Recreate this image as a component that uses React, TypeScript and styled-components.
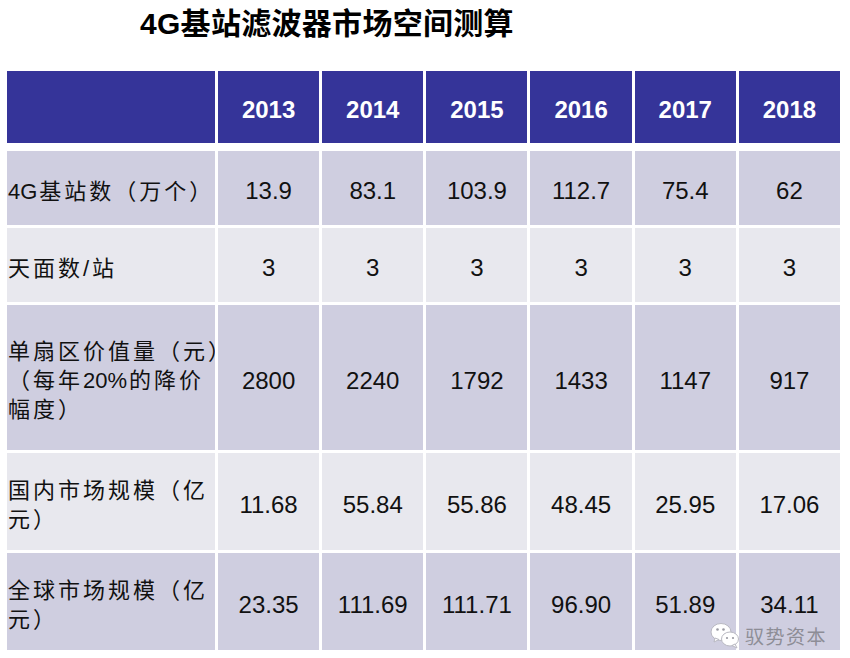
import React from 'react';
import styled, { createGlobalStyle } from 'styled-components';

const GlobalStyle = createGlobalStyle`
    html, body {
        margin: 0;
        padding: 0;
        background: #ffffff;
    }
    body {
        font-family: "Liberation Sans", Arial, "Noto Sans CJK SC", sans-serif;
    }
`;

const Page = styled.div`
    position: relative;
    width: 850px;
    height: 658px;
    overflow: hidden;
`;

const Title = styled.h1`
    margin: 0;
    height: 71px;
    padding: 5px 0 0 140px;
    box-sizing: border-box;
    font-family: "Liberation Sans", Arial, "Noto Sans CJK SC", sans-serif;
    font-size: 30px;
    font-weight: bold;
    line-height: 38px;
    color: #000;
    letter-spacing: 0.3px;
`;

const Table = styled.div`
    display: flex;
    flex-direction: column;
    gap: 3px;
    margin-left: 7px;
    width: 833px;
`;

const Row = styled.div<{ height: number; tone: 'head' | 'dark' | 'light' }>`
    display: grid;
    grid-template-columns: 208px repeat(6, 1fr);
    column-gap: 3px;
    height: ${p => p.height}px;
    margin-bottom: ${p => (p.tone === 'head' ? 5 : 0)}px;

    & > div {
        background: ${p =>
            p.tone === 'head' ? '#353499' : p.tone === 'dark' ? '#cfcee0' : '#e8e8ee'};
    }
`;

const Label = styled.div`
    display: flex;
    align-items: center;
    overflow: hidden;
    white-space: nowrap;
    padding: 6px 0 0 1px;
    box-sizing: border-box;
    font-family: "Liberation Sans", Arial, "Noto Sans CJK SC", sans-serif;
    font-size: 22px;
    letter-spacing: 3px;
    line-height: 29px;
    color: #111;
`;

const Latin = styled.span`
    letter-spacing: 0;
    margin-right: 2px;
`;

const Cell = styled.div<{ head?: boolean }>`
    display: flex;
    align-items: center;
    justify-content: center;
    padding-top: ${p => (p.head ? 6 : 6)}px;
    box-sizing: border-box;
    font-family: "Liberation Sans", Arial, sans-serif;
    font-size: 24px;
    font-weight: ${p => (p.head ? 'bold' : 'normal')};
    color: ${p => (p.head ? '#ffffff' : '#111111')};
`;

const Watermark = styled.div`
    position: absolute;
    left: 710px;
    top: 621px;
    display: flex;
    align-items: center;
    gap: 5px;
    font-family: "Noto Sans CJK SC", sans-serif;
    font-size: 19px;
    letter-spacing: 1.5px;
    color: #8d8d96;
`;

const years = ['2013', '2014', '2015', '2016', '2017', '2018'];

const rows: { label: React.ReactNode; values: string[]; height: number; tone: 'dark' | 'light' }[] = [
    {
        label: (
            <span>
                <Latin>4G</Latin>基站数（万个）
            </span>
        ),
        values: ['13.9', '83.1', '103.9', '112.7', '75.4', '62'],
        height: 74,
        tone: 'dark',
    },
    { label: '天面数/站', values: ['3', '3', '3', '3', '3', '3'], height: 74, tone: 'light' },
    {
        label: (
            <span>
                单扇区价值量（元）
                <br />
                （每年<Latin>20%</Latin>的降价
                <br />
                幅度）
            </span>
        ),
        values: ['2800', '2240', '1792', '1433', '1147', '917'],
        height: 145,
        tone: 'dark',
    },
    {
        label: (
            <span>
                国内市场规模（亿
                <br />
                元）
            </span>
        ),
        values: ['11.68', '55.84', '55.86', '48.45', '25.95', '17.06'],
        height: 97,
        tone: 'light',
    },
    {
        label: (
            <span>
                全球市场规模（亿
                <br />
                元）
            </span>
        ),
        values: ['23.35', '111.69', '111.71', '96.90', '51.89', '34.11'],
        height: 97,
        tone: 'dark',
    },
];

const WeChatIcon: React.FC = () => (
    <svg width="30" height="28" viewBox="0 0 30 28">
        <ellipse cx="11" cy="11" rx="10" ry="8.5" fill="#fff" stroke="#b9b9c2" strokeWidth="1" />
        <path d="M5 17 L4 21 L9 18.5 Z" fill="#fff" stroke="#b9b9c2" strokeWidth="1" />
        <circle cx="7.5" cy="8.5" r="1.3" fill="#9a9aa3" />
        <circle cx="13.5" cy="8.5" r="1.3" fill="#9a9aa3" />
        <ellipse cx="20" cy="18" rx="8.5" ry="7" fill="#fff" stroke="#b9b9c2" strokeWidth="1" />
        <path d="M25 23 L27 27 L22 24.5 Z" fill="#fff" stroke="#b9b9c2" strokeWidth="1" />
        <circle cx="17" cy="17" r="1.1" fill="#9a9aa3" />
        <circle cx="23" cy="17" r="1.1" fill="#9a9aa3" />
    </svg>
);

const App: React.FC = () => (
    <Page>
        <GlobalStyle />
        <Title>4G基站滤波器市场空间测算</Title>
        <Table>
            <Row height={72} tone="head">
                <Label />
                {years.map(y => (
                    <Cell head key={y}>{y}</Cell>
                ))}
            </Row>
            {rows.map((r, i) => (
                <Row key={i} height={r.height} tone={r.tone}>
                    <Label>{r.label}</Label>
                    {r.values.map((v, j) => (
                        <Cell key={j}>{v}</Cell>
                    ))}
                </Row>
            ))}
        </Table>
        <Watermark>
            <WeChatIcon />
            驭势资本
        </Watermark>
    </Page>
);

export default App;
